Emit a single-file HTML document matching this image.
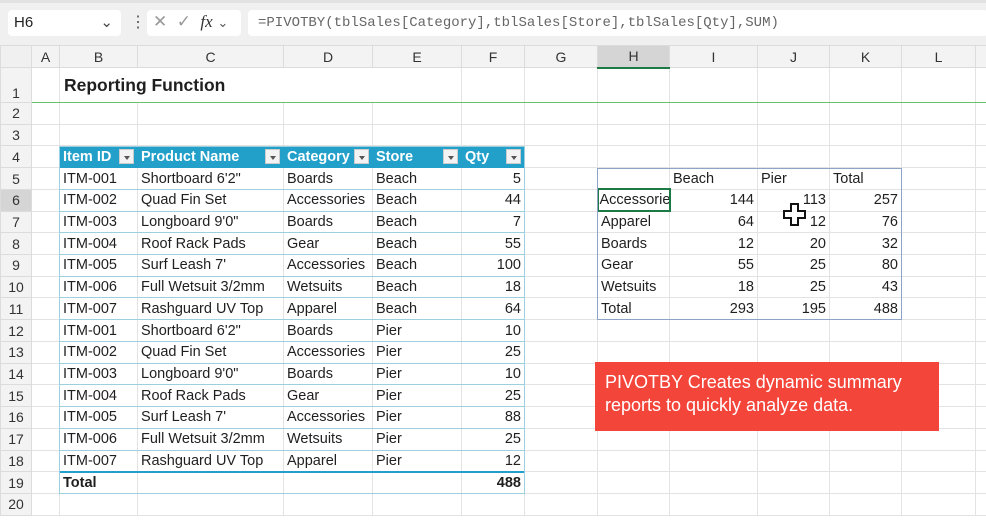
<!DOCTYPE html>
<html><head><meta charset="utf-8"><style>
*{margin:0;padding:0;box-sizing:border-box}
body{width:986px;height:522px;overflow:hidden;background:#fff;font-family:"Liberation Sans",Arial,sans-serif;position:relative;color:#1f1f1f}
.top{position:absolute;left:0;top:0;width:986px;height:45px;background:#f0f0f0;border-top:3px solid #e2e2e2}
.box{position:absolute;background:#fff;border-radius:4px;top:10px;height:26px}
table{position:absolute;left:0;top:45px;border-collapse:collapse;table-layout:fixed;width:986px}
td{border:1px solid #e3e3e3;font-size:14.5px;padding:0 3px;white-space:nowrap;overflow:hidden;height:21.73px;line-height:18px}
tr.ch td{background:#f3f3f3;text-align:center;color:#333;height:22px;border-color:#dcdcdc;font-size:14px}
td.rh{background:#f3f3f3;text-align:center;color:#333;border-color:#dcdcdc;font-size:14px;padding:0}
.th{background:#23a0c9;color:#fff;font-weight:bold;border-color:#23a0c9;position:relative}
.th i{position:absolute;right:3px;top:3px;width:15px;height:15px;background:#f3f3f3;border:1px solid #ccc}
.th i:after{content:"";position:absolute;left:4px;top:6px;border-left:3px solid transparent;border-right:3px solid transparent;border-top:4px solid #555}
.tb{border-top:1px solid #9ccfe0;border-bottom:1px solid #9ccfe0}
.r{text-align:right}
.pv{position:absolute;left:597px;top:168px;width:305px;height:152px;border:1px solid #8da4c6}
</style></head><body>
<div class="top"></div>
<div class="box" style="left:8px;width:113px;font-size:15px;padding:4px 6px">H6<span style="position:absolute;right:8px;top:3px;color:#444">⌄</span></div>
<div style="position:absolute;left:130px;top:12px;color:#555;font-size:16px">⋮</div>
<div class="box" style="left:147px;width:94px;color:#999;font-size:17px;padding:2px 6px">✕&nbsp; ✓&nbsp; <i style="font-family:'Liberation Serif',serif;color:#333">fx</i> <span style="font-size:13px;color:#555">⌄</span></div>
<div class="box" style="left:248px;width:740px;font-family:'Liberation Mono',monospace;font-size:14px;color:#666;padding:5px 10px">=PIVOTBY(tblSales[Category],tblSales[Store],tblSales[Qty],SUM)</div>
<table>
<colgroup><col style="width:31px"><col style="width:28px"><col style="width:78px"><col style="width:146px"><col style="width:89px"><col style="width:89px"><col style="width:63px"><col style="width:73px"><col style="width:72px"><col style="width:88px"><col style="width:72px"><col style="width:72px"><col style="width:74px"><col style="width:11px"></colgroup>
<tr class="ch"><td style="background:#f0f0f0"></td><td>A</td><td>B</td><td>C</td><td>D</td><td>E</td><td>F</td><td>G</td><td style="background:#d5d5d5;border-bottom:2px solid #1e7a45">H</td><td>I</td><td>J</td><td>K</td><td>L</td><td></td></tr>
<tr style="height:35px"><td class="rh" style="vertical-align:bottom">1</td><td style="border-bottom:1px solid #6cc06c"></td><td colspan="4" style="font-weight:bold;font-size:17.5px;border-bottom:1px solid #6cc06c;border-right:none;padding-left:4px">Reporting Function</td><td style="border-bottom:1px solid #6cc06c"></td><td style="border-bottom:1px solid #6cc06c"></td><td style="border-bottom:1px solid #6cc06c"></td><td style="border-bottom:1px solid #6cc06c"></td><td style="border-bottom:1px solid #6cc06c"></td><td style="border-bottom:1px solid #6cc06c"></td><td style="border-bottom:1px solid #6cc06c"></td><td style="border-bottom:1px solid #6cc06c"></td></tr>
<tr><td class="rh">2</td><td></td><td></td><td></td><td></td><td></td><td></td><td></td><td></td><td></td><td></td><td></td><td></td><td></td></tr>
<tr><td class="rh">3</td><td></td><td></td><td></td><td></td><td></td><td></td><td></td><td></td><td></td><td></td><td></td><td></td><td></td></tr>
<tr><td class="rh">4</td><td></td><td class="th">Item ID<i></i></td><td class="th">Product Name<i></i></td><td class="th">Category<i></i></td><td class="th">Store<i></i></td><td class="th">Qty<i></i></td><td></td><td></td><td></td><td></td><td></td><td></td><td></td></tr>
<tr><td class="rh">5</td><td></td><td class="tb">ITM-001</td><td class="tb">Shortboard 6'2"</td><td class="tb">Boards</td><td class="tb">Beach</td><td class="tb r">5</td><td></td><td></td><td>Beach</td><td>Pier</td><td>Total</td><td></td><td></td></tr>
<tr><td class="rh" style="background:#d5d5d5">6</td><td></td><td class="tb">ITM-002</td><td class="tb">Quad Fin Set</td><td class="tb">Accessories</td><td class="tb">Beach</td><td class="tb r">44</td><td></td><td style="border:2px solid #1e7a45;padding:0 1px;text-overflow:clip">Accessories</td><td class="r">144</td><td class="r">113</td><td class="r">257</td><td></td><td></td></tr>
<tr><td class="rh">7</td><td></td><td class="tb">ITM-003</td><td class="tb">Longboard 9'0"</td><td class="tb">Boards</td><td class="tb">Beach</td><td class="tb r">7</td><td></td><td>Apparel</td><td class="r">64</td><td class="r">12</td><td class="r">76</td><td></td><td></td></tr>
<tr><td class="rh">8</td><td></td><td class="tb">ITM-004</td><td class="tb">Roof Rack Pads</td><td class="tb">Gear</td><td class="tb">Beach</td><td class="tb r">55</td><td></td><td>Boards</td><td class="r">12</td><td class="r">20</td><td class="r">32</td><td></td><td></td></tr>
<tr><td class="rh">9</td><td></td><td class="tb">ITM-005</td><td class="tb">Surf Leash 7'</td><td class="tb">Accessories</td><td class="tb">Beach</td><td class="tb r">100</td><td></td><td>Gear</td><td class="r">55</td><td class="r">25</td><td class="r">80</td><td></td><td></td></tr>
<tr><td class="rh">10</td><td></td><td class="tb">ITM-006</td><td class="tb">Full Wetsuit 3/2mm</td><td class="tb">Wetsuits</td><td class="tb">Beach</td><td class="tb r">18</td><td></td><td>Wetsuits</td><td class="r">18</td><td class="r">25</td><td class="r">43</td><td></td><td></td></tr>
<tr><td class="rh">11</td><td></td><td class="tb">ITM-007</td><td class="tb">Rashguard UV Top</td><td class="tb">Apparel</td><td class="tb">Beach</td><td class="tb r">64</td><td></td><td>Total</td><td class="r">293</td><td class="r">195</td><td class="r">488</td><td></td><td></td></tr>
<tr><td class="rh">12</td><td></td><td class="tb">ITM-001</td><td class="tb">Shortboard 6'2"</td><td class="tb">Boards</td><td class="tb">Pier</td><td class="tb r">10</td><td></td><td></td><td></td><td></td><td></td><td></td><td></td></tr>
<tr><td class="rh">13</td><td></td><td class="tb">ITM-002</td><td class="tb">Quad Fin Set</td><td class="tb">Accessories</td><td class="tb">Pier</td><td class="tb r">25</td><td></td><td></td><td></td><td></td><td></td><td></td><td></td></tr>
<tr><td class="rh">14</td><td></td><td class="tb">ITM-003</td><td class="tb">Longboard 9'0"</td><td class="tb">Boards</td><td class="tb">Pier</td><td class="tb r">10</td><td></td><td></td><td></td><td></td><td></td><td></td><td></td></tr>
<tr><td class="rh">15</td><td></td><td class="tb">ITM-004</td><td class="tb">Roof Rack Pads</td><td class="tb">Gear</td><td class="tb">Pier</td><td class="tb r">25</td><td></td><td></td><td></td><td></td><td></td><td></td><td></td></tr>
<tr><td class="rh">16</td><td></td><td class="tb">ITM-005</td><td class="tb">Surf Leash 7'</td><td class="tb">Accessories</td><td class="tb">Pier</td><td class="tb r">88</td><td></td><td></td><td></td><td></td><td></td><td></td><td></td></tr>
<tr><td class="rh">17</td><td></td><td class="tb">ITM-006</td><td class="tb">Full Wetsuit 3/2mm</td><td class="tb">Wetsuits</td><td class="tb">Pier</td><td class="tb r">25</td><td></td><td></td><td></td><td></td><td></td><td></td><td></td></tr>
<tr><td class="rh">18</td><td></td><td class="tb">ITM-007</td><td class="tb">Rashguard UV Top</td><td class="tb">Apparel</td><td class="tb">Pier</td><td class="tb r">12</td><td></td><td></td><td></td><td></td><td></td><td></td><td></td></tr>
<tr><td class="rh">19</td><td></td><td class="tb" style="font-weight:bold;border-top:2px solid #23a0c9">Total</td><td class="tb" style="border-top:2px solid #23a0c9"></td><td class="tb" style="border-top:2px solid #23a0c9"></td><td class="tb" style="border-top:2px solid #23a0c9"></td><td class="tb r" style="font-weight:bold;border-top:2px solid #23a0c9">488</td><td></td><td></td><td></td><td></td><td></td><td></td><td></td></tr>
<tr><td class="rh">20</td><td></td><td></td><td></td><td></td><td></td><td></td><td></td><td></td><td></td><td></td><td></td><td></td><td></td></tr>
</table>
<div style="position:absolute;left:59px;top:146px;width:466px;height:348px;border:1px solid #9ccfe0;pointer-events:none"></div>
<div class="pv"></div>
<svg style="position:absolute;left:782px;top:202px" width="26" height="26" viewBox="0 0 26 26"><path d="M9 2h7v7h7v7h-7v7H9v-7H2V9h7z" fill="#fff" stroke="#111" stroke-width="2"/></svg>
<div style="position:absolute;left:595px;top:362px;width:344px;height:69px;background:#f4453b;color:#fff;font-size:18px;line-height:23px;padding:9px 10px">PIVOTBY Creates dynamic summary reports to quickly analyze data.</div>
</body></html>
